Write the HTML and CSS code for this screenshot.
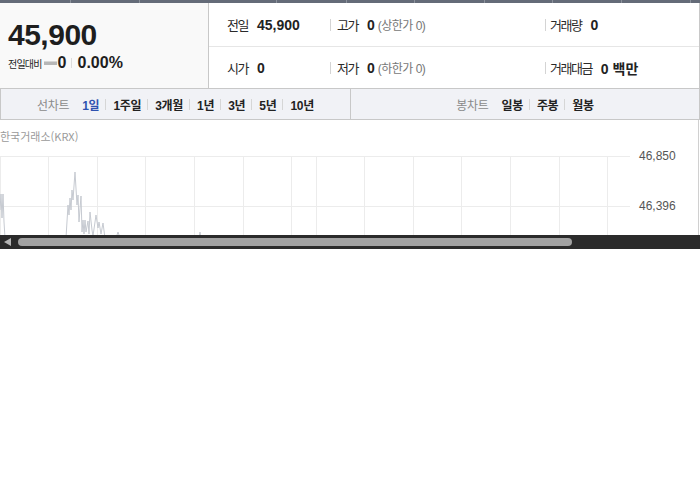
FILE: index.html
```html
<!DOCTYPE html>
<html lang="ko">
<head>
<meta charset="utf-8">
<title>시세</title>
<link rel="stylesheet" href="styles.css">
</head>
<body>
<div class="page">
  <div class="topbar">
    <span class="w71"></span><span class="w69"></span><span class="w137"></span><span class="w70"></span><span class="w68"></span><span class="w70"></span><span class="w68"></span><span class="w69"></span><span class="w69"></span><span class="rest"></span>
  </div>

  <div class="summary">
    <div class="price">
      <div class="now">45,900</div>
      <div class="change">
        <span class="lbl">전일대비</span><i class="flat"></i><b>0</b><span class="sep"></span><b>0.00%</b>
      </div>
    </div>
    <div class="detail">
      <div class="row">
        <div class="cell"><span class="k">전일</span><b>45,900</b></div>
        <div class="cell c2"><span class="k">고가</span><b>0</b><span class="sub">(상한가 0)</span></div>
        <div class="cell c3"><span class="k">거래량</span><b>0</b></div>
      </div>
      <div class="row">
        <div class="cell"><span class="k">시가</span><b>0</b></div>
        <div class="cell c2"><span class="k">저가</span><b>0</b><span class="sub">(하한가 0)</span></div>
        <div class="cell c3"><span class="k">거래대금</span><b>0 백만</b></div>
      </div>
    </div>
  </div>

  <div class="tabs">
    <div class="tg tg1">
      <span class="title">선차트</span>
      <a class="on">1일</a><a>1주일</a><a>3개월</a><a>1년</a><a>3년</a><a>5년</a><a>10년</a>
    </div>
    <div class="tg tg2">
      <span class="title">봉차트</span>
      <a>일봉</a><a>주봉</a><a>월봉</a>
    </div>
  </div>

  <div class="chart">
    <svg class="plot" width="700" height="115" viewBox="0 0 700 115">
      <text class="src" x="0" y="21">한국거래소(KRX)</text>
      <g class="grid">
        <line x1="0" y1="36.5" x2="630" y2="36.5"/>
        <line x1="0" y1="86.5" x2="630" y2="86.5"/>
        <line x1="0.5" y1="36" x2="0.5" y2="115"/>
        <line x1="48.5" y1="36" x2="48.5" y2="115"/>
        <line x1="97.5" y1="36" x2="97.5" y2="115"/>
        <line x1="145.5" y1="36" x2="145.5" y2="115"/>
        <line x1="194.5" y1="36" x2="194.5" y2="115"/>
        <line x1="243.5" y1="36" x2="243.5" y2="115"/>
        <line x1="291.5" y1="36" x2="291.5" y2="115"/>
        <line x1="316.5" y1="36" x2="316.5" y2="115"/>
        <line x1="364.5" y1="36" x2="364.5" y2="115"/>
        <line x1="413.5" y1="36" x2="413.5" y2="115"/>
        <line x1="461.5" y1="36" x2="461.5" y2="115"/>
        <line x1="510.5" y1="36" x2="510.5" y2="115"/>
        <line x1="559.5" y1="36" x2="559.5" y2="115"/>
        <line x1="607.5" y1="36" x2="607.5" y2="115"/>
      </g>
      <polyline class="line" points="0,90 1,74 2,98 3,74 4,102 5,118 66,118 68,85 69,95 70,78 71,90 72,70 73,80 75,52 77,85 78,75 79,102 81,76 82,112 83,100 84,114 85,100 86,112 88,101 89,114 90,92 92,110 93,116 96,95 98,108 99,102 101,114 103,103 105,118 116,118 118,112 120,118 199,118 200,112 201,118"/>
      <text class="yl" x="639" y="40">46,850</text>
      <text class="yl" x="639" y="90">46,396</text>
      <line class="edge" x1="698.5" y1="0" x2="698.5" y2="115"/>
    </svg>
  </div>

  <div class="scroll">
    <i class="arrow"></i>
    <i class="thumb"></i>
  </div>
</div>
</body>
</html>
```

FILE: styles.css
```css
html, body {
  margin: 0;
  padding: 0;
  background: #fff;
}

body {
  font-family: "Liberation Sans", "Noto Sans CJK KR", sans-serif;
  color: #222;
}

.page {
  width: 700px;
}

/* top strip */
.topbar {
  display: flex;
  height: 3px;
  background: #646b78;
}
.topbar span {
  border-right: 1px solid #8b919b;
  flex: none;
}
.topbar .w71 { width: 70px; }
.topbar .w69 { width: 68px; }
.topbar .w137 { width: 136px; }
.topbar .w70 { width: 69px; }
.topbar .w68 { width: 67px; }
.topbar .rest { flex: 1; border-right: 0; }

/* summary */
.summary {
  display: flex;
  height: 85px;
  border-bottom: 1px solid #c8c8c8;
}

.price {
  width: 209px;
  box-sizing: border-box;
  background: #f9f9f9;
  border-right: 1px solid #c8c8c8;
  padding: 17px 0 0 8px;
}

.now {
  font-size: 30px;
  line-height: 30px;
  font-weight: bold;
  letter-spacing: -0.5px;
  color: #1e1e1e;
}

.change {
  display: flex;
  align-items: center;
  height: 16px;
  margin-top: 5px;
}

.change .lbl {
  font-size: 10px;
  letter-spacing: -0.8px;
  color: #1e1e1e;
  margin-right: 2px;
}

.change .flat {
  width: 13px;
  height: 4px;
  background: #b7b7b7;
  border-top: 1px solid #d6d6d6;
  box-sizing: border-box;
  margin-right: 1px;
}

.change b {
  font-size: 16px;
  line-height: 16px;
  color: #1e1e1e;
}

.change .sep {
  width: 1px;
  height: 10px;
  background: #dcdcdc;
  margin: 0 6px 0 4px;
}

.detail {
  flex: 1;
  border-right: 1px solid #c8c8c8;
  display: flex;
  flex-direction: column;
}

.row {
  height: 43px;
  display: grid;
  grid-template-columns: 103px 215px 1fr;
  align-items: center;
  padding-left: 18px;
}

.row + .row {
  height: 41px;
  border-top: 1px solid #e6e6e6;
}

.cell {
  display: flex;
  align-items: center;
  font-size: 13px;
  color: #2a2a2a;
}

.cell .k {
  letter-spacing: -1.5px;
  margin-right: 9px;
}

.cell b {
  font-size: 14px;
  color: #222;
}

.cell .sub {
  font-size: 12px;
  color: #777;
  margin-left: 3px;
  letter-spacing: -0.5px;
}

.c2::before,
.c3::before {
  content: "";
  width: 1px;
  height: 12px;
  background: #d4d4d4;
}
.c2::before { margin-right: 6px; }
.c3::before { margin-right: 4px; }

/* tabs */
.tabs {
  display: flex;
  height: 30px;
  background: #f1f2f6;
  border-bottom: 1px solid #c8c8c8;
}

.tg {
  display: flex;
  justify-content: center;
  align-items: center;
  font-size: 12px;
  letter-spacing: -0.3px;
}

.tg1 {
  width: 351px;
  box-sizing: border-box;
  border-left: 1px solid #c8c8c8;
  border-right: 1px solid #c8c8c8;
}

.tg2 {
  flex: 1;
  border-right: 1px solid #c8c8c8;
}

.tg .title {
  color: #8a8a8a;
  margin-right: 13px;
}

.tg a {
  font-weight: bold;
  color: #222;
  display: flex;
  align-items: center;
}

.tg a.on {
  color: #2f52b0;
}

.tg a + a::before {
  content: "";
  width: 1px;
  height: 11px;
  background: #d6d6d6;
  margin: 0 7px 0 6px;
}

/* chart */
.chart {
  height: 115px;
  overflow: hidden;
}

.plot {
  display: block;
}

.plot .src {
  font-family: "Noto Sans CJK KR", "Liberation Sans", sans-serif;
  font-size: 11px;
  fill: #9a9a9a;
}

.plot .grid line {
  stroke: #ececec;
  stroke-width: 1;
}

.plot .line {
  fill: none;
  stroke: #c6cad1;
  stroke-width: 1;
}

.plot .yl {
  font-size: 12px;
  fill: #555;
}

.plot .edge {
  stroke: #d0d0d0;
}

/* scrollbar */
.scroll {
  height: 14px;
  background: #2b2b2b;
  display: flex;
  align-items: center;
}

.scroll .arrow {
  width: 0;
  height: 0;
  border-right: 7px solid #b5b5b5;
  border-top: 4px solid transparent;
  border-bottom: 4px solid transparent;
  margin-left: 4px;
}

.scroll .thumb {
  width: 554px;
  height: 8px;
  margin-left: 7px;
  background: #a2a2a2;
  border-radius: 4px;
}
```
